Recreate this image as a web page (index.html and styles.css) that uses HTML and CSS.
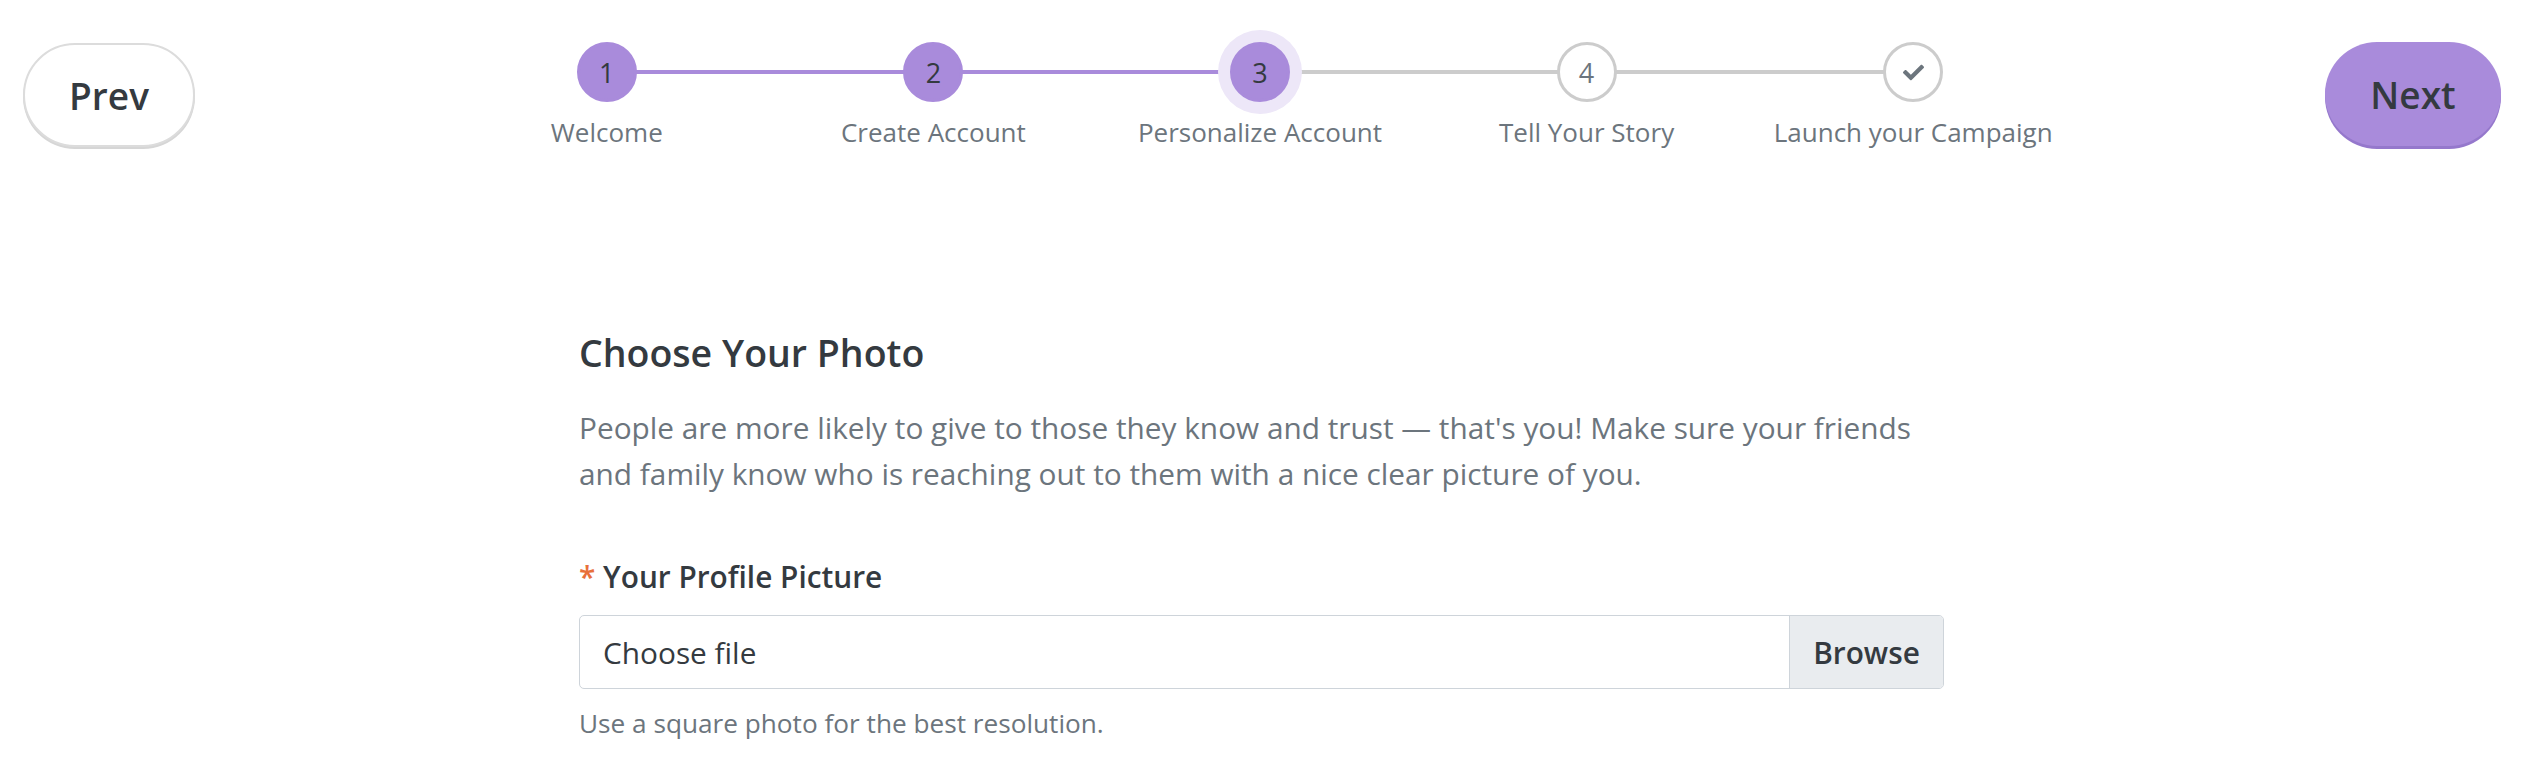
FILE: index.html
```html
<!DOCTYPE html>
<html lang="en">
<head>
<meta charset="utf-8">
<title>Personalize Account</title>
<link rel="stylesheet" href="styles.css">
</head>
<body>
<header class="topbar">
  <button class="btn btn-prev" type="button">Prev</button>
  <ol class="stepper">
    <li class="step done"><span class="dot">1</span><span class="label">Welcome</span></li>
    <li class="step done"><span class="dot">2</span><span class="label">Create Account</span></li>
    <li class="step current"><span class="dot">3</span><span class="label">Personalize Account</span></li>
    <li class="step"><span class="dot">4</span><span class="label">Tell Your Story</span></li>
    <li class="step"><span class="dot"><svg class="check" viewBox="0 0 512 512" aria-hidden="true"><path d="M173.898 439.404l-166.4-166.4c-9.997-9.997-9.997-26.206 0-36.204l36.203-36.204c9.997-9.998 26.207-9.998 36.204 0L192 312.69 432.095 72.596c9.997-9.997 26.207-9.997 36.204 0l36.203 36.204c9.997 9.997 9.997 26.206 0 36.204l-294.4 294.401c-9.998 9.997-26.207 9.997-36.204-.001z"/></svg></span><span class="label">Launch your Campaign</span></li>
  </ol>
  <button class="btn btn-next" type="button">Next</button>
</header>

<main class="content">
  <h2 class="title">Choose Your Photo</h2>
  <p class="lead">People are more likely to give to those they know and trust — that's you! Make sure your friends and family know who is reaching out to them with a nice clear picture of you.</p>

  <label class="field-label"><span class="req">*</span> Your Profile Picture</label>
  <div class="file-input">
    <span class="file-text">Choose file</span>
    <span class="file-browse">Browse</span>
  </div>
  <p class="help">Use a square photo for the best resolution.</p>
</main>
</body>
</html>
```

FILE: styles.css
```css
* { box-sizing: border-box; }

body {
  margin: 0;
  background: #ffffff;
  font-family: "Open Sans", "Noto Sans", sans-serif;
  font-size: 29.8px;
  color: #343a40;
}

.topbar {
  display: flex;
  justify-content: space-between;
  align-items: flex-start;
  padding: 42px 28px 0 23px;
}

.btn {
  font-family: "Open Sans", "Noto Sans", sans-serif;
  font-size: 37px;
  font-weight: 600;
  color: #343a40;
  border-radius: 52px;
  height: 104px;
  margin-top: 1px;
  cursor: pointer;
}

.btn-prev {
  width: 172px;
  background: #ffffff;
  border: 2px solid #dcdcdc;
  box-shadow: 0 2px 0 #d6d6d6;
}

.btn-next {
  width: 176px;
  margin-top: 0;
  background: #a98bdb;
  border: none;
  box-shadow: 0 3px 0 #9578cc;
}

.stepper {
  list-style: none;
  margin: 0;
  padding: 0;
  display: flex;
}

.step {
  width: 326.6px;
  display: flex;
  flex-direction: column;
  align-items: center;
  position: relative;
}

.step::after {
  content: "";
  position: absolute;
  top: 28px;
  left: 50%;
  width: 100%;
  height: 4px;
  background: #cccccc;
}

.step:last-child::after { display: none; }
.step.done::after { background: #a98bdb; }

.dot {
  position: relative;
  z-index: 1;
  width: 60px;
  height: 60px;
  border-radius: 50%;
  border: 3px solid #cccccc;
  background: #ffffff;
  color: #6c757d;
  font-size: 27px;
  display: flex;
  align-items: center;
  justify-content: center;
}

.step.done .dot,
.step.current .dot {
  background: #a98bdb;
  border-color: #a98bdb;
  color: #343a40;
}

.step.current .dot {
  box-shadow: 0 0 0 12px #ede7f8;
}

.check {
  width: 21px;
  height: 21px;
  fill: #6c757d;
}

.label {
  margin-top: 12px;
  font-size: 26px;
  line-height: 36px;
  color: #6c757d;
  white-space: nowrap;
}

.content {
  width: 1371px;
  margin: 181px auto 0;
  padding-right: 6px;
}

.title {
  margin: 0;
  font-size: 37.5px;
  line-height: 44px;
  font-weight: 600;
  color: #343a40;
}

.lead {
  margin: 30px 0 0;
  font-size: 29.8px;
  line-height: 46px;
  color: #6c757d;
}

.field-label {
  display: block;
  margin-top: 60px;
  font-size: 29.8px;
  line-height: 40px;
  font-weight: 600;
  color: #343a40;
}

.req { color: #e8703a; }

.file-input {
  margin-top: 18px;
  display: flex;
  height: 74px;
  border: 1px solid #ced4da;
  border-radius: 5px;
  overflow: hidden;
}

.file-text {
  flex: 1;
  display: flex;
  align-items: center;
  padding-left: 23px;
  font-size: 29.8px;
  color: #343a40;
}

.file-browse {
  width: 154px;
  display: flex;
  align-items: center;
  justify-content: center;
  background: #e9ecef;
  border-left: 1px solid #ced4da;
  font-size: 29.8px;
  font-weight: 600;
  color: #343a40;
}

.help {
  margin: 16px 0 0;
  font-size: 26.2px;
  line-height: 36px;
  color: #6c757d;
}
```
